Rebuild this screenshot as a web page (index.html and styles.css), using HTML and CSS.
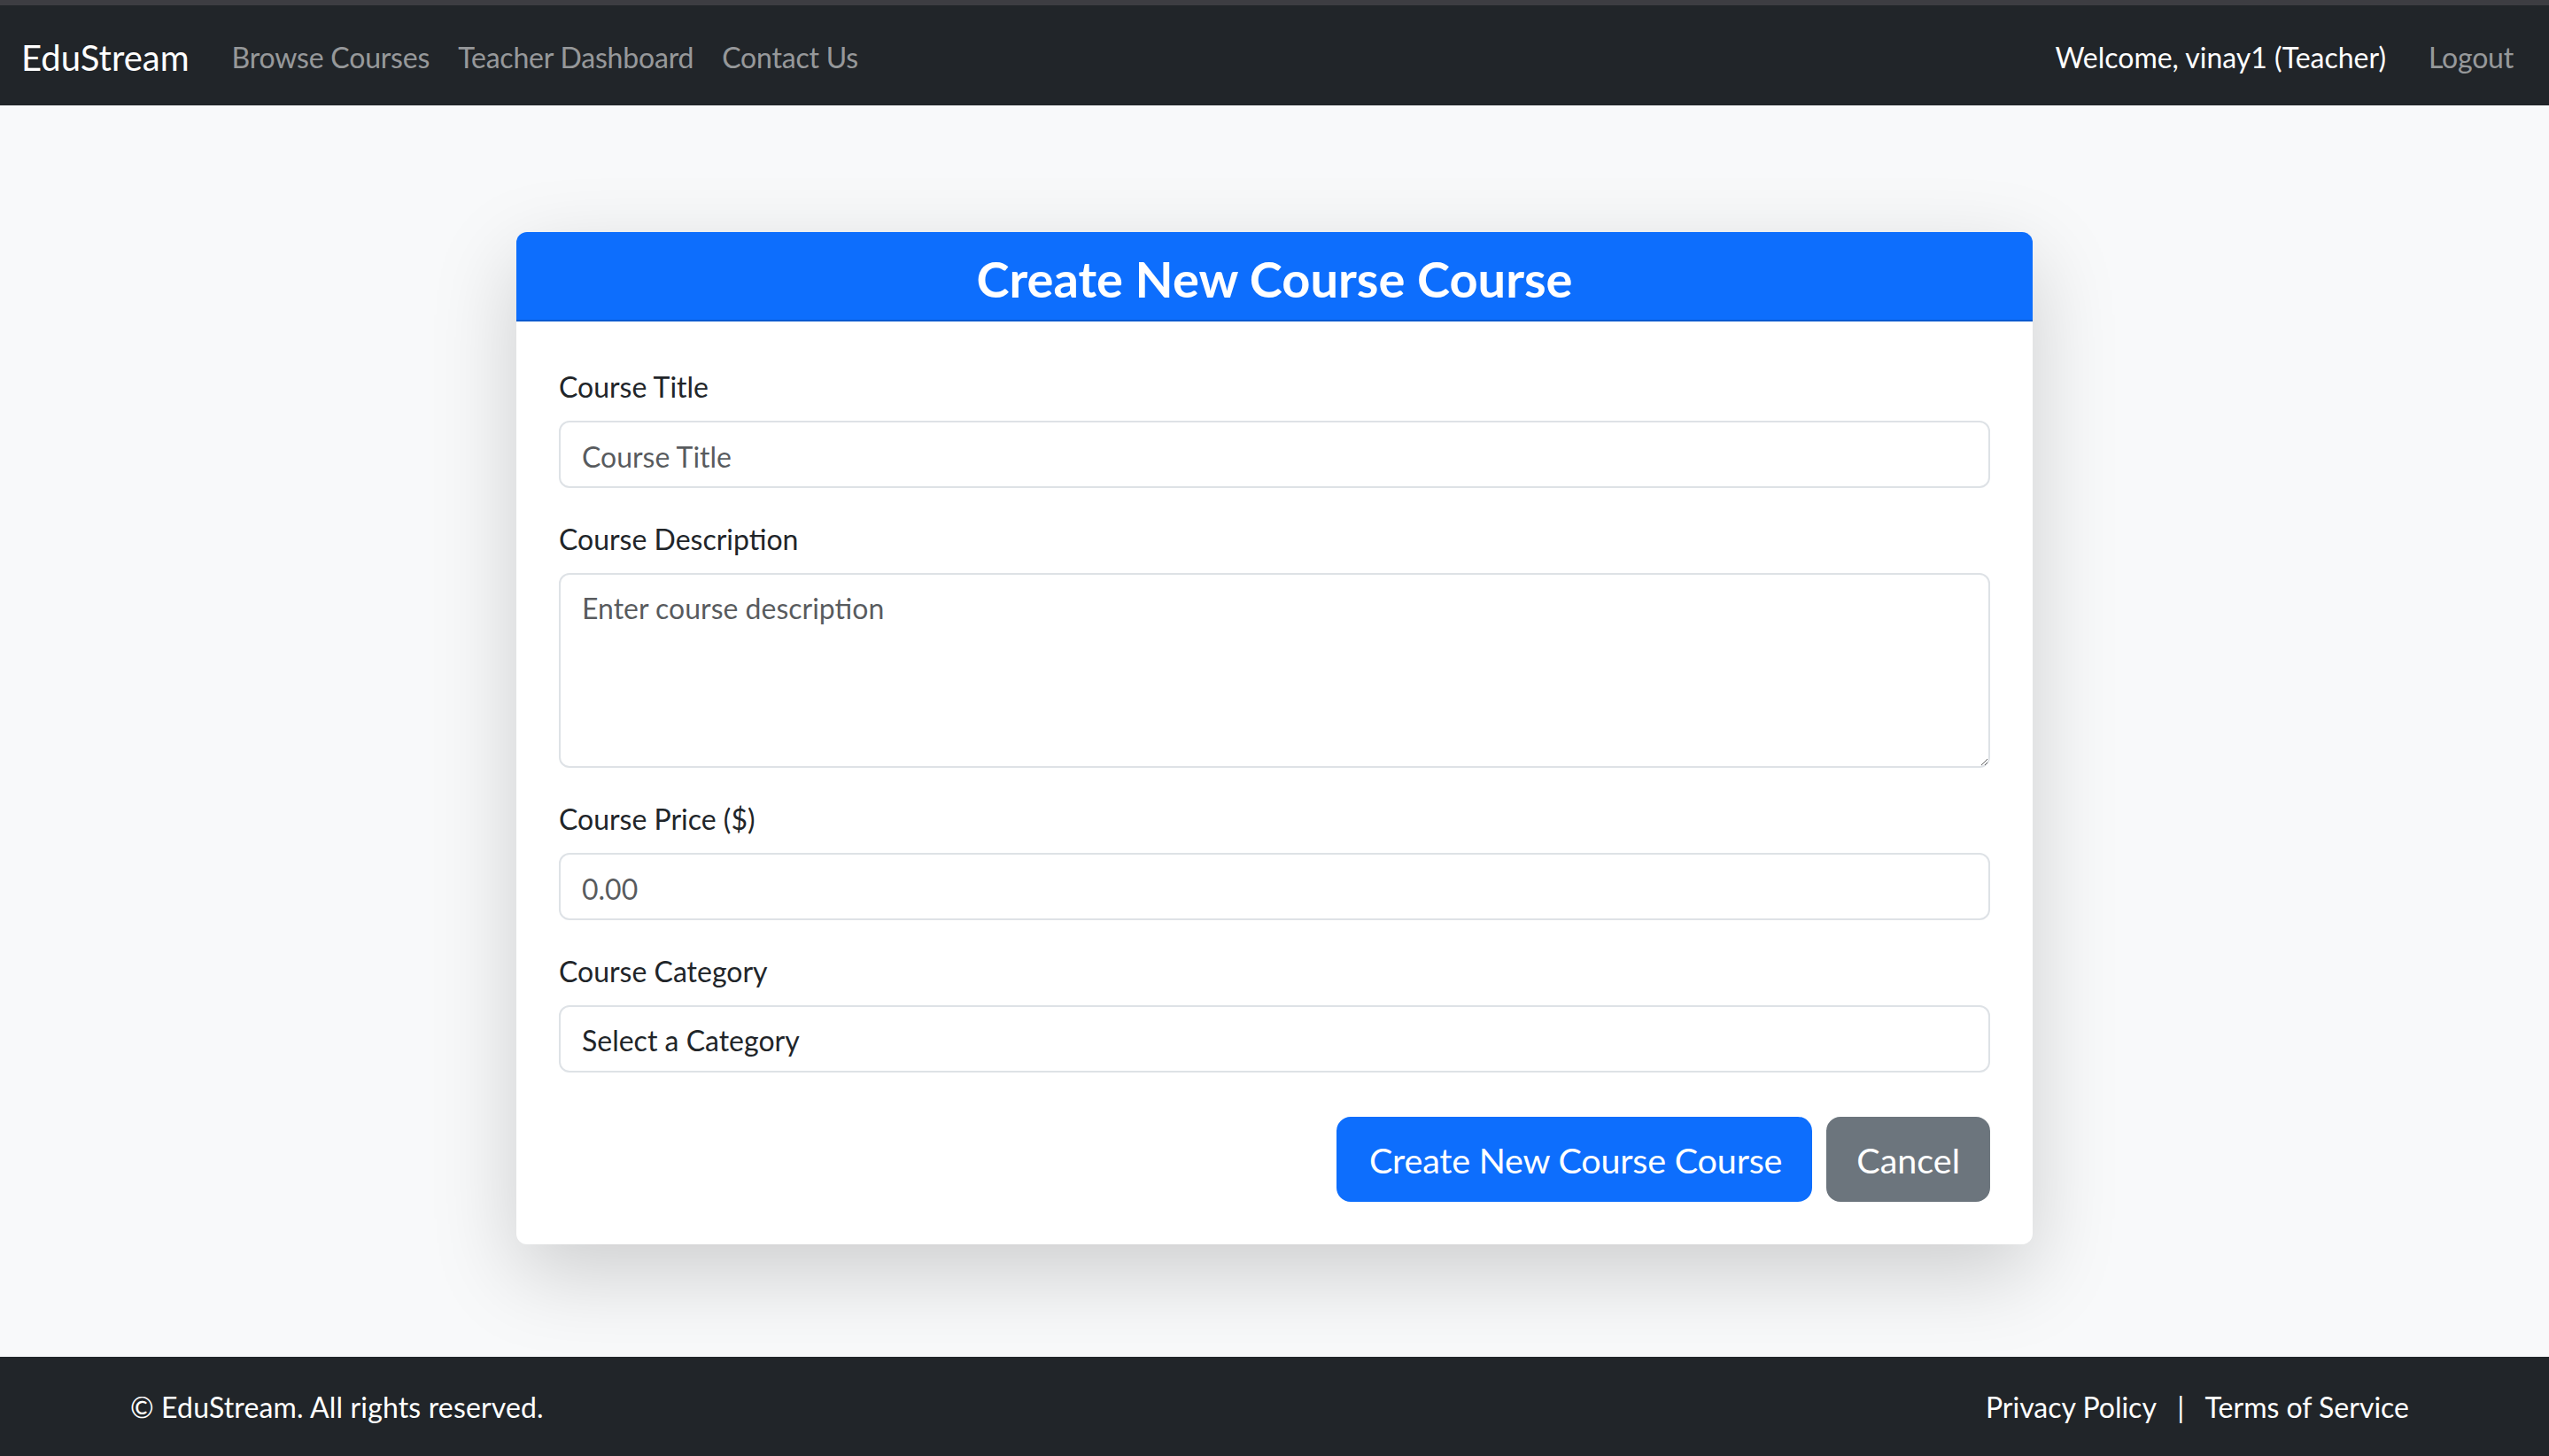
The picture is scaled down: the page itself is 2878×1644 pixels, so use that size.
FILE: index.html
```html
<!DOCTYPE html>
<html lang="en">
<head>
<meta charset="utf-8">
<title>Create New Course - EduStream</title>
<link rel="stylesheet" href="styles.css">
</head>
<body>
<nav class="navbar">
  <div class="nav-left">
    <a class="brand" href="#">EduStream</a>
    <ul class="nav-links">
      <li><a class="nav-link" href="#">Browse Courses</a></li>
      <li><a class="nav-link" href="#">Teacher Dashboard</a></li>
      <li><a class="nav-link" href="#">Contact Us</a></li>
    </ul>
  </div>
  <div class="nav-right">
    <span class="welcome">Welcome, vinay1 (Teacher)</span>
    <a class="nav-link" href="#">Logout</a>
  </div>
</nav>

<main class="main">
  <div class="card">
    <div class="card-header">
      <h3 class="card-title">Create New Course Course</h3>
    </div>
    <form class="card-body">
      <div class="field">
        <label class="label" for="title">Course Title</label>
        <input class="control" id="title" type="text" placeholder="Course Title">
      </div>
      <div class="field">
        <label class="label" for="desc">Course Description</label>
        <textarea class="control control-area" id="desc" placeholder="Enter course description"></textarea>
      </div>
      <div class="field">
        <label class="label" for="price">Course Price ($)</label>
        <input class="control" id="price" type="text" placeholder="0.00">
      </div>
      <div class="field">
        <label class="label" for="cat">Course Category</label>
        <select class="control control-select" id="cat">
          <option>Select a Category</option>
        </select>
      </div>
      <div class="actions">
        <button type="button" class="btn btn-primary">Create New Course Course</button>
        <button type="button" class="btn btn-secondary">Cancel</button>
      </div>
    </form>
  </div>
</main>

<footer class="footer">
  <span class="copy">© EduStream. All rights reserved.</span>
  <div class="footer-links">
    <a href="#">Privacy Policy</a>
    <span class="sep">|</span>
    <a href="#">Terms of Service</a>
  </div>
</footer>
</body>
</html>
```
FILE: styles.css
```css
html, body {
  margin: 0;
  padding: 0;
}

body {
  font-family: Lato, "Liberation Sans", sans-serif;
  font-size: 32px;
  line-height: 1.5;
  color: #212529;
  background: #f8f9fa;
  min-height: 100vh;
  display: flex;
  flex-direction: column;
}

a {
  text-decoration: none;
}

/* Navbar */
.navbar {
  background: #212529;
  border-top: 6px solid #3d3d42;
  height: 119px;
  box-sizing: border-box;
  padding: 4px 24px 0;
  display: flex;
  align-items: center;
  justify-content: space-between;
}

.nav-left,
.nav-right {
  display: flex;
  align-items: center;
}

.brand {
  color: #fff;
  font-size: 40px;
  line-height: 60px;
  margin-right: 32px;
}

.nav-links {
  list-style: none;
  margin: 0;
  padding: 0;
  display: flex;
}

.nav-link {
  display: block;
  padding: 16px;
  color: rgba(255, 255, 255, 0.55);
  letter-spacing: -0.2px;
}

.welcome {
  color: #fff;
  padding: 16px;
  margin-right: 16px;
}

/* Main */
.main {
  flex: 1;
  padding-top: 143px;
  padding-bottom: 127px;
  display: flex;
  justify-content: center;
  align-items: flex-start;
}

.card {
  width: 1712px;
  background: #fff;
  border-radius: 12px;
  box-shadow: 0 32px 96px rgba(0, 0, 0, 0.175);
  overflow: hidden;
}

.card-header {
  background: #0d6efd;
  color: #fff;
  padding: 19px 32px 13px;
  border-bottom: 2px solid rgba(0, 0, 0, 0.175);
  text-align: center;
}

.card-title {
  margin: 0;
  font-size: 56px;
  line-height: 1.2;
  font-weight: 700;
}

.card-body {
  padding: 48px;
}

.field {
  margin-bottom: 32px;
}

.label {
  display: block;
  margin-bottom: 16px;
  padding-top: 2px;
  height: 48px;
  box-sizing: border-box;
  line-height: 48px;
}

.control {
  display: block;
  width: 100%;
  box-sizing: border-box;
  height: 76px;
  padding: 14px 24px 10px;
  border: 2px solid #dee2e6;
  border-radius: 12px;
  background: #fff;
  font: inherit;
  line-height: 48px;
  color: #212529;
  outline: none;
}

.control::placeholder {
  color: rgba(33, 37, 41, 0.75);
}

.control-area {
  height: 220px;
  resize: vertical;
}

.control-select {
  appearance: none;
  -webkit-appearance: none;
}

.actions {
  display: flex;
  justify-content: flex-end;
  gap: 16px;
  margin-top: 50px;
}

.btn {
  font: inherit;
  font-size: 39.5px;
  line-height: 60px;
  padding: 17px 32px 15px;
  border: 2px solid transparent;
  border-radius: 16px;
  color: #fff;
  cursor: pointer;
}

.btn-primary {
  background: #0d6efd;
  border-color: #0d6efd;
  padding-left: 35px;
  letter-spacing: -0.2px;
}

.btn-secondary {
  background: #6c757d;
  border-color: #6c757d;
}

/* Footer */
.footer {
  background: #212529;
  color: #fff;
  height: 113px;
  box-sizing: border-box;
  padding: 0 158px 0 147px;
  display: flex;
  align-items: center;
  justify-content: space-between;
}

.copy {
  letter-spacing: 0.15px;
}

.footer-links a {
  color: #fff;
}

.sep {
  margin: 0 16px;
}
```
